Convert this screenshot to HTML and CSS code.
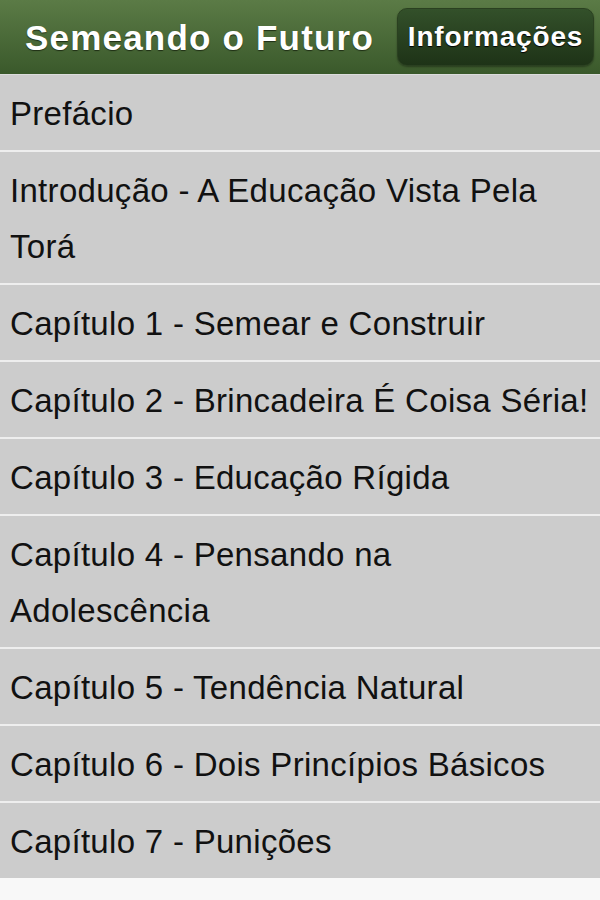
FILE: index.html
```html
<!DOCTYPE html>
<html lang="pt">
<head>
<meta charset="utf-8">
<title>Semeando o Futuro</title>
<link rel="stylesheet" href="styles.css">
</head>
<body>
<header class="header">
  <h1 class="title">Semeando o Futuro</h1>
  <a class="btn" href="#">Informações</a>
</header>
<ul class="list">
  <li class="item">Prefácio</li>
  <li class="item">Introdução - A Educação Vista Pela Torá</li>
  <li class="item">Capítulo 1 - Semear e Construir</li>
  <li class="item">Capítulo 2 - Brincadeira É Coisa Séria!</li>
  <li class="item">Capítulo 3 - Educação Rígida</li>
  <li class="item">Capítulo 4 - Pensando na Adolescência</li>
  <li class="item">Capítulo 5 - Tendência Natural</li>
  <li class="item">Capítulo 6 - Dois Princípios Básicos</li>
  <li class="item">Capítulo 7 - Punições</li>
</ul>
</body>
</html>
```
FILE: styles.css
```css
html, body {
  margin: 0;
  padding: 0;
  background: #f8f8f8;
  font-family: "Liberation Sans", Arial, sans-serif;
}
.header {
  height: 75px;
  box-sizing: border-box;
  display: flex;
  align-items: center;
  justify-content: space-between;
  padding: 0 6px 0 25px;
  background: linear-gradient(#5b7b46, #3a592b);
  border-bottom: 1px solid #dcdcdc;
}
.title {
  margin: 2px 0 0 0;
  color: #fff;
  font-size: 35px;
  font-weight: bold;
  letter-spacing: 1.2px;
  text-shadow: 0 1px 1px #1e2e14;
  white-space: nowrap;
}
.btn {
  display: flex;
  align-items: center;
  justify-content: center;
  width: 197px;
  height: 58px;
  box-sizing: border-box;
  border-radius: 10px;
  background: linear-gradient(#33502a, #1e3317);
  border: 1px solid #2a4020;
  box-shadow: 0 1px 2px rgba(0,0,0,0.35);
  color: #fff;
  font-size: 28px;
  font-weight: bold;
  letter-spacing: 0.8px;
  text-decoration: none;
  text-shadow: 0 1px 1px #000;
}
.list {
  list-style: none;
  margin: 0;
  padding: 0;
}
.item {
  background: #cccccc;
  color: #111;
  font-size: 33px;
  letter-spacing: 0.3px;
  line-height: 56px;
  padding: 11px 10px 8px 10px;
  border-bottom: 2px solid #eeeeee;
}
.item:last-child {
  border-bottom: none;
}
```
